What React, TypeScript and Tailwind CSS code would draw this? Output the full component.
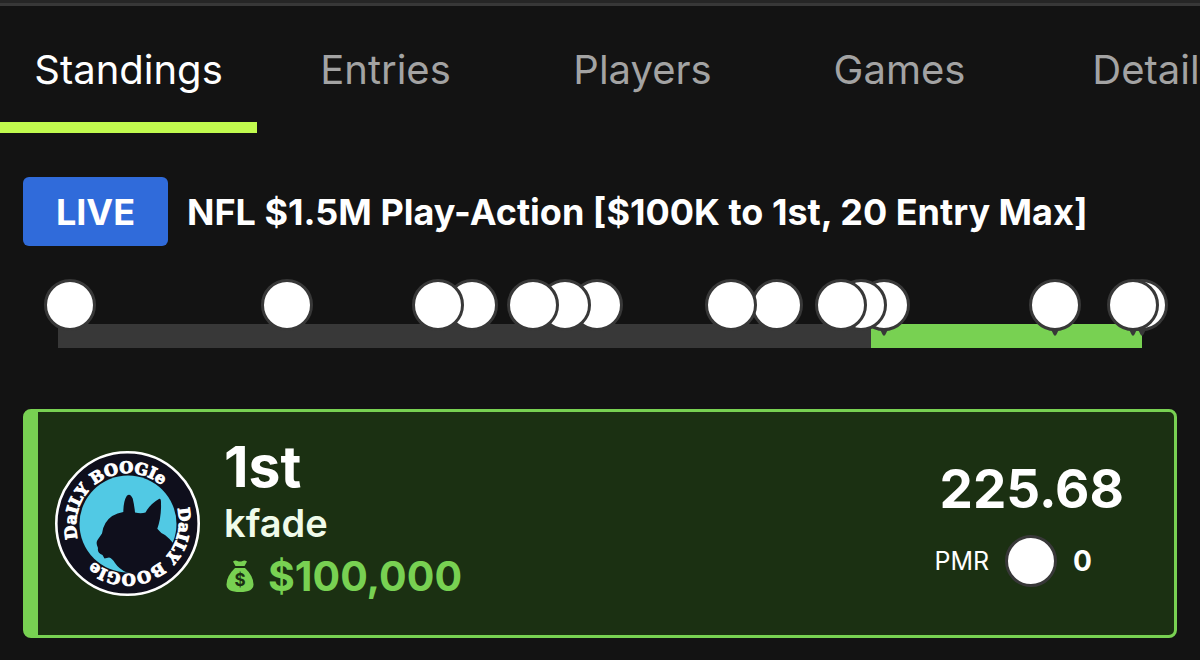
import { useState } from "react";

type Marker = {
  id: number;
  position: number;
  winning: boolean;
};

type Entry = {
  rank: string;
  username: string;
  prize: string;
  points: string;
  pmr: number;
};

const tabs = ["Standings", "Entries", "Players", "Games", "Details"];

// position = percent of the track, left to right
const markers: Marker[] = [
  { id: 1, position: 1.1, winning: false },
  { id: 2, position: 21.1, winning: false },
  { id: 3, position: 35.1, winning: false },
  { id: 4, position: 38.2, winning: false },
  { id: 5, position: 43.8, winning: false },
  { id: 6, position: 46.8, winning: false },
  { id: 7, position: 49.7, winning: false },
  { id: 8, position: 62.1, winning: false },
  { id: 9, position: 66.3, winning: false },
  { id: 10, position: 72.2, winning: false },
  { id: 11, position: 74.1, winning: false },
  { id: 12, position: 76.2, winning: true },
  { id: 13, position: 92, winning: true },
  { id: 14, position: 99.2, winning: true },
  { id: 15, position: 100, winning: true },
];

const payLine = 75;

const entry: Entry = {
  rank: "1st",
  username: "kfade",
  prize: "$100,000",
  points: "225.68",
  pmr: 0,
};

function Tabs() {
  const [active, setActive] = useState("Standings");

  return (
    <nav className="flex overflow-hidden">
      {tabs.map((tab) => (
        <button
          key={tab}
          type="button"
          onClick={() => setActive(tab)}
          className={
            tab === active
              ? "flex h-[127px] w-[257px] shrink-0 items-center justify-center border-b-[11px] border-[#c1fb4e] pt-3 text-[40px] text-white"
              : "flex h-[127px] w-[257px] shrink-0 items-center justify-center border-b-[11px] border-transparent pt-3 text-[40px] text-[#a3a3a3]"
          }
        >
          {tab}
        </button>
      ))}
    </nav>
  );
}

function StandingsTrack() {
  return (
    <div className="relative mx-[58px] mt-[78px] h-6">
      <div className="flex h-full bg-[#383838]">
        <div
          className="ml-auto h-full bg-[#78d152]"
          style={{ width: `${100 - payLine}%` }}
        />
      </div>

      {markers.map((marker) => (
        <div
          key={marker.id}
          className="absolute -top-[45px] -translate-x-1/2"
          style={{
            left: `${marker.position}%`,
            zIndex: markers.length - marker.id,
          }}
        >
          {marker.winning ? (
            <svg
              viewBox="0 0 14 10"
              className="absolute top-[47px] left-1/2 h-[10px] w-[14px] -translate-x-1/2"
              aria-hidden="true"
            >
              <path d="M0 3h14c-3 0-4 2-5 4.500Q7 12 5 7.500C4 5 3 3 0 3z" fill="#383838" />
            </svg>
          ) : null}
          <div className="relative size-[52px] rounded-full border-[3px] border-[#383838] bg-white" />
        </div>
      ))}
    </div>
  );
}

function Avatar() {
  return (
    <svg viewBox="0 0 145 145" className="size-[145px] shrink-0">
      <defs>
        <path
          id="ring"
          d="M22.800 87.700A52 52 0 0 1 122.200 57.300A52 52 0 0 1 22.800 87.700"
        />
      </defs>
      <circle cx="72.500" cy="72.500" r="71.200" fill="#0f0f1c" stroke="#fff" strokeWidth="2.600" />
      <circle cx="73" cy="73" r="48.500" fill="#51c9e4" />
      <path
        d="M71.700 121.500Q64 118 60 112Q57 107 54 106.500L49.500 107.500L47.500 104Q42 102 43 97Q40.500 92 42.500 89L47 82.500Q48 76 50.500 72Q56 63 68.300 61Q68.500 50 71.700 45Q75 41.500 77.700 47.500Q79.500 55 80 61.500Q86 63 90.500 61.500Q95 53 104.300 47.700Q106.200 47.500 106 52Q106.500 66 102.300 77.700Q106 82.500 110 84Q114 87 119 93Q112 116 90 121Q80 123 71.700 121.500Z"
        fill="#0f0f1c"
      />
      <text
        className="font-['DejaVu_Serif',serif] text-[16px] font-bold"
        fill="#fff"
        stroke="#fff"
        strokeWidth="1"
      >
        <textPath href="#ring">DaILY BOOGIe</textPath>
        <textPath href="#ring" startOffset="50%">
          DaILY BOOGIe
        </textPath>
      </text>
    </svg>
  );
}

function MoneyBag() {
  return (
    <svg viewBox="0 0 28 32" className="h-8 w-7" fill="#78d152" aria-hidden="true">
      <path d="M7 1.500Q9.500 0 11.500 1Q14 2 16.500 1Q18.500 0 21 1.500L18.500 6H9.500z" />
      <path d="M9 8h10q8.500 8 8.500 16.500Q27.500 32 14 32T.500 24.500Q.500 16 9 8z" />
      <text
        x="14"
        y="26"
        textAnchor="middle"
        className="font-[Inter,sans-serif] text-[17px] font-bold"
        fill="#1b3012"
      >
        $
      </text>
    </svg>
  );
}

function EntryCard() {
  return (
    <section className="mx-[23px] mt-[61px] flex items-center rounded-lg border-[3px] border-l-[15px] border-[#78d152] bg-[#1b3012] pr-[50px] pl-[17px]">
      <Avatar />

      <div className="ml-6 pt-[22px] pb-[29px]">
        <p className="text-[57px] leading-[66px] font-bold">{entry.rank}</p>
        <p className="text-[38px] leading-[46px] font-semibold text-[#f0fbea]">
          {entry.username}
        </p>
        <p className="flex items-center gap-[14px] pl-0.5 text-[41px] leading-[60px] font-bold text-[#78d152]">
          <MoneyBag />
          {entry.prize}
        </p>
      </div>

      <div className="ml-auto flex flex-col items-end pb-1">
        <p className="text-[53px] leading-[64px] font-bold">{entry.points}</p>
        <div className="mt-[14px] flex items-center gap-4 pr-8 text-[25px] leading-9">
          <span>PMR</span>
          <span className="size-[52px] rounded-full border-[3px] border-[#383838] bg-white" />
          <span className="text-[28px] font-bold">{entry.pmr}</span>
        </div>
      </div>
    </section>
  );
}

export default function App() {
  return (
    <main className="min-h-screen bg-[#131313] pb-[22px] font-[Inter,sans-serif] text-white">
      <div className="h-[6px] border-b-[3px] border-[#383838] bg-[#262626]" />

      <Tabs />

      <header className="mt-11 flex items-center gap-[19px] px-[23px]">
        <span className="flex h-[69px] w-[145px] shrink-0 items-center justify-center rounded-md bg-[#306bda] text-[36px] font-bold">
          LIVE
        </span>
        <h1 className="text-[36px] font-bold">
          NFL $1.5M Play-Action [$100K to 1st, 20 Entry Max]
        </h1>
      </header>

      <StandingsTrack />
      <EntryCard />
    </main>
  );
}
